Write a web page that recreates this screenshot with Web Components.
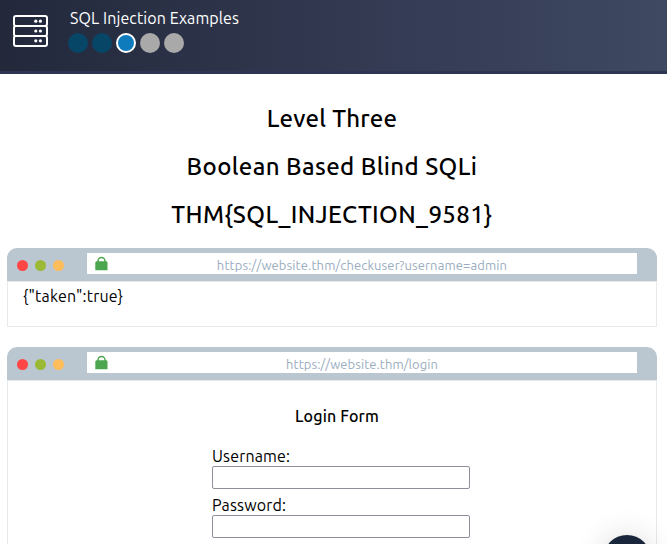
<!DOCTYPE html>
<html lang="en">
<head>
<meta charset="utf-8">
<title>SQL Injection Examples</title>
<style>
html,body{margin:0;background:#fff;overflow:hidden;height:544px}
body{font:16px/24px Ubuntu,"Noto Sans",sans-serif;color:#000}
</style>
</head>
<body>
<lab-page></lab-page>
<script>
const define = (name, html) => customElements.define(name, class extends HTMLElement {
  connectedCallback() {
    if (this.shadowRoot) return;
    const t = document.createElement('template');
    t.innerHTML = html;
    this.attachShadow({mode: 'open'}).append(t.content.cloneNode(true));
  }
});

define('text-line', `<style>:host{display:block;white-space:nowrap}</style><slot></slot>`);

define('server-icon', `<style>:host{display:block;width:36px;height:34px}svg{display:block}</style>
<svg width="36" height="34" viewBox="0 0 36 34" fill="none" stroke="#fff" stroke-width="2">
<rect x="1" y="1" width="33" height="10" rx="2"/><rect x="1" y="11" width="33" height="10" rx="2"/><rect x="1" y="21" width="33" height="10" rx="2"/>
<g fill="#fff" stroke="none"><circle cx="22.800" cy="6.200" r="1.600"/><circle cx="27.400" cy="6.200" r="1.600"/><circle cx="22.800" cy="16" r="1.600"/><circle cx="27.400" cy="16" r="1.600"/><circle cx="22.800" cy="25.800" r="1.600"/><circle cx="27.400" cy="25.800" r="1.600"/></g></svg>`);

define('level-dot', `<style>
:host{display:block;box-sizing:border-box;width:20px;height:20px;border-radius:50%;background:#a9a9a9}
:host([state=done]){background:#084668}
:host([state=current]){background:#0e7bbd;border:2px solid #fff}
</style>`);

define('lab-header', `<style>
:host{display:flex;box-sizing:border-box;height:74px;padding:15px 0 0 13px;gap:19px;border-bottom:3px solid #2f3654;background:linear-gradient(90deg,#23293b,#353c55 62%,#3f4962);color:#fff}
.col{margin-top:-9px}
.dots{display:flex;gap:4px;margin-top:3px}
text-line{margin-left:2px;letter-spacing:.1px}
</style><server-icon></server-icon><div class="col"><text-line>SQL Injection Examples</text-line>
<div class="dots"><level-dot state="done"></level-dot><level-dot state="done"></level-dot><level-dot state="current"></level-dot><level-dot></level-dot><level-dot></level-dot></div></div>`);

define('lock-icon', `<style>:host{display:block;width:13px;height:15px}svg{display:block}</style>
<svg width="13" height="15" viewBox="0 0 13 15"><path d="M3 6V5a3.500 3.500 0 0 1 7 0V6" fill="none" stroke="#4ca64f" stroke-width="1.500"/><path d="M1.300 5.300H11.700L12.500 6.500V14.300H.3V6.500Z" fill="#4ca64f"/></svg>`);

define('browser-window', `<style>
:host{display:block;width:650px}
.bar{display:flex;box-sizing:border-box;height:33px;padding:5px 20px 0 10px;border-radius:10px 10px 0 0;background:#bac6d0}
.dots{display:flex;gap:7px;width:70px;padding-top:7px}
i{width:11px;height:11px;border-radius:50%;background:#ff4646}
i+i{background:#9bb934}i+i+i{background:#ffbd5b}
.url{display:flex;box-sizing:border-box;width:550px;height:21px;background:#fff;padding:3px 21px 0 8px;color:#9aadc0;font-size:13px;line-height:19px;letter-spacing:.11px}
.mid{flex:1;display:flex;justify-content:center}
.body{box-sizing:border-box;border:1px solid #e8e9eb;padding:2px 15px 18px;letter-spacing:.16px}
</style><div class="bar"><div class="dots"><i></i><i></i><i></i></div><div class="url"><lock-icon></lock-icon><div class="mid"><slot name="url"></slot></div></div></div>
<div class="body"><slot></slot></div>`);

define('form-field', `<style>:host{display:block;height:49px}
input{display:block;box-sizing:border-box;width:258px;height:23px;margin:0;border:1px solid #8f8f9d;border-radius:2px;background:#fff}
.l{height:22px;line-height:25px}</style><div class="l"><slot></slot></div><input>`);

define('login-form', `<style>:host{display:block;width:250px;height:150px;margin:21px auto 0;position:relative;left:5px}
.t{display:flex;justify-content:center;font-weight:500;padding-bottom:16px}
</style><div class="t"><text-line>Login Form</text-line></div>
<form-field><text-line>Username:</text-line></form-field><form-field><text-line>Password:</text-line></form-field>`);

define('help-bubble', `<style>:host{position:fixed;left:603px;top:535px;width:48px;height:48px;border-radius:50%;background:#18253a;box-shadow:0 1px 6px rgba(0,0,0,.06),0 2px 32px rgba(0,0,0,.16)}</style>`);

define('lab-page', `<style>
:host{display:block;height:544px;overflow:hidden}
main{padding:0 0 0 7px}
.heads{display:flex;flex-direction:column;align-items:center;width:650px;height:153px;padding-top:21px;font-size:24px;line-height:48px;font-weight:500;letter-spacing:.4px}
.heads text-line:first-child{letter-spacing:.25px}
browser-window+browser-window{margin-top:20px}
.url-login,.json{letter-spacing:.2px}
</style><lab-header></lab-header><main><div class="heads"><text-line>Level Three</text-line><text-line>Boolean Based Blind SQLi</text-line><text-line>THM{SQL_INJECTION_9581}</text-line></div>
<browser-window><text-line slot="url" style="letter-spacing:.11px">https://website.thm/checkuser?username=admin</text-line><text-line class="json">{"taken":true}</text-line></browser-window>
<browser-window><text-line slot="url" style="letter-spacing:.06px">https://website.thm/login</text-line><login-form></login-form></browser-window></main><help-bubble></help-bubble>`);
</script>
</body>
</html>
